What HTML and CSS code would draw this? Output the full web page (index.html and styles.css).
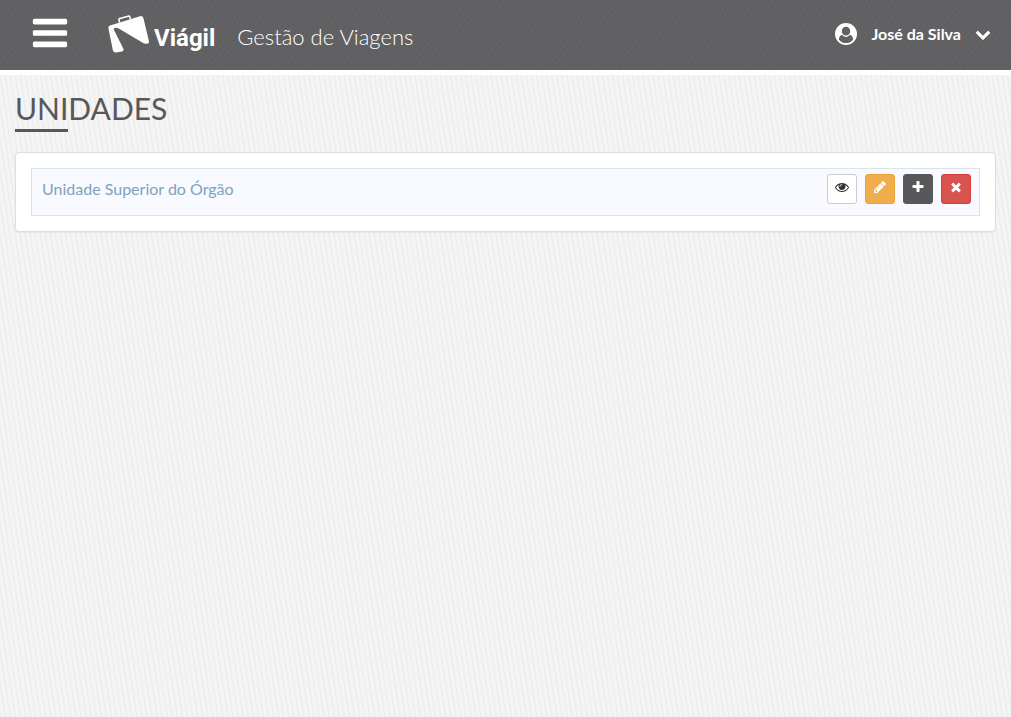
FILE: index.html
```
<!DOCTYPE html>
<html lang="pt-BR">
<head>
    <meta charset="utf-8">
    <title>Viágil - Unidades</title>
    <link rel="stylesheet" href="styles.css">
</head>
<body>
    <header class="topbar">
        <button type="button" class="menu-toggle" aria-label="Menu">
            <svg viewBox="0 0 1792 1792"><path d="M1664 1344v128q0 26-19 45t-45 19h-1408q-26 0-45-19t-19-45v-128q0-26 19-45t45-19h1408q26 0 45 19t19 45zm0-512v128q0 26-19 45t-45 19h-1408q-26 0-45-19t-19-45v-128q0-26 19-45t45-19h1408q26 0 45 19t19 45zm0-512v128q0 26-19 45t-45 19h-1408q-26 0-45-19t-19-45v-128q0-26 19-45t45-19h1408q26 0 45 19t19 45z"/></svg>
        </button>
        <a href="#" class="brand">
            <svg class="brand-icon" viewBox="0 0 42 38">
                <path d="M11.500 7.500L11 4.800Q10.800 3.700 12 3.400L20 1.200Q21.500 .9 21.900 2L22.300 4" fill="none" stroke="#fff" stroke-width="1.600"/>
                <path fill-rule="evenodd" d="M2 10.500L32 1.200Q34.600 .6 35.400 3L41 26.500Q41.300 28.700 39 28.700L36 28.500L12 14.200Q8 12.200 6.200 13.200Q5 14 6.500 16L15.500 34Q16 36 14 36.500L8 37.600Q5.800 37.800 5 35.800L.4 13.500Q0 11.200 2 10.500Z"/>
            </svg>
            <span class="brand-name">Viágil</span>
        </a>
        <span class="tagline">Gestão de Viagens</span>
        <button type="button" class="user-menu">
            <svg class="user-icon" viewBox="0 0 22 22">
                <path fill-rule="evenodd" d="M11 0a11 11 0 1 1 0 22a11 11 0 1 1 0-22zM11 3.800a4.200 4.400 0 1 0 0 8.800a4.200 4.400 0 1 0 0-8.800zM3.800 16.600A9.200 9.200 0 0 0 18.200 16.600c-.4-2.900-1.500-4.600-3.400-4.900-1 1.400-2.300 2.200-3.800 2.200s-2.800-.8-3.800-2.200c-1.900.3-3 2-3.400 4.900z"/>
            </svg>
            <span>José da Silva</span>
            <svg class="chevron" viewBox="0 0 1792 1792"><path d="M1683 808l-742 741q-19 19-45 19t-45-19l-742-741q-19-19-19-45.500t19-45.500l166-165q19-19 45-19t45 19l531 531 531-531q19-19 45-19t45 19l166 165q19 19 19 45.500t-19 45.500z"/></svg>
        </button>
    </header>

    <main class="content">
        <h1>Unidades</h1>
        <div class="panel">
            <div class="unit">
                <a href="#" class="unit-name">Unidade Superior do Órgão</a>
                <div class="actions">
                    <button type="button" class="btn btn-default" aria-label="Visualizar">
                        <svg viewBox="0 0 1792 1792"><path d="M1664 960q-152-236-381-353 61 104 61 225 0 185-131.500 316.500t-316.500 131.500-316.500-131.500-131.500-316.500q0-121 61-225-229 117-381 353 133 205 333.500 326.500t434.500 121.500 434.500-121.500 333.500-326.500zm-720-384q0-20-14-34t-34-14q-125 0-214.500 89.500t-89.500 214.500q0 20 14 34t34 14 34-14 14-34q0-86 61-147t147-61q20 0 34-14t14-34zm848 384q0 34-20 69-140 230-376.500 368.500t-499.500 138.500-499.500-139-376.500-368q-20-35-20-69t20-69q140-229 376.500-368t499.500-139 499.500 139 376.500 368q20 35 20 69z"/></svg>
                    </button>
                    <button type="button" class="btn btn-warning" aria-label="Editar">
                        <svg viewBox="0 0 1792 1792"><path d="M491 1536l91-91-235-235-91 91v107h128v128h107zm523-928q0-22-22-22-10 0-17 7l-542 542q-7 7-7 17 0 22 22 22 10 0 17-7l542-542q7-7 7-17zm-54-192l416 416-832 832h-416v-416zm683 96q0 53-37 90l-166 166-416-416 166-165q36-38 90-38 53 0 91 38l235 234q37 39 37 91z"/></svg>
                    </button>
                    <button type="button" class="btn btn-dark" aria-label="Adicionar">
                        <svg viewBox="0 0 1792 1792"><path d="M1600 736v192q0 40-28 68t-68 28h-416v416q0 40-28 68t-68 28h-192q-40 0-68-28t-28-68v-416h-416q-40 0-68-28t-28-68v-192q0-40 28-68t68-28h416v-416q0-40 28-68t68-28h192q40 0 68 28t28 68v416h416q40 0 68 28t28 68z"/></svg>
                    </button>
                    <button type="button" class="btn btn-danger" aria-label="Excluir">
                        <svg viewBox="0 0 1792 1792"><path d="M1490 1322q0 40-28 68l-136 136q-28 28-68 28t-68-28l-294-294-294 294q-28 28-68 28t-68-28l-136-136q-28-28-28-68t28-68l294-294-294-294q-28-28-28-68t28-68l136-136q28-28 68-28t68 28l294 294 294-294q28-28 68-28t68 28l136 136q28 28 28 68t-28 68l-294 294 294 294q28 28 28 68z"/></svg>
                    </button>
                </div>
            </div>
        </div>
    </main>
</body>
</html>
```
FILE: styles.css
```
* {
    box-sizing: border-box;
}
body {
    margin: 0;
    min-height: 100vh;
    font-family: Lato, sans-serif;
    font-size: 16px;
    color: #58585a;
    background: #f4f4f4 repeating-linear-gradient(81deg, #ececec 0, #f5f5f5 2px, #f5f5f5 4px, #ececec 5px);
}
svg {
    display: block;
    fill: currentColor;
}
button {
    font-family: inherit;
    cursor: pointer;
}

/* top bar */
.topbar {
    display: flex;
    align-items: center;
    height: 75px;
    padding: 0 20px 4px 30px;
    color: #fff;
    border-bottom: 5px solid #fff;
    background-color: #606062;
    background-image:
        repeating-linear-gradient(37deg, rgba(255, 255, 255, 0.03) 0, transparent 2px, transparent 3px),
        repeating-linear-gradient(127deg, rgba(0, 0, 0, 0.04) 0, transparent 2px, transparent 5px);
}
.menu-toggle {
    padding: 0;
    border: none;
    color: #fff;
    background: none;
}
.menu-toggle svg {
    width: 40px;
    height: 40px;
}
.brand {
    display: flex;
    align-items: center;
    gap: 4px;
    margin-left: 38px;
    padding-top: 2px;
    color: #fff;
    text-decoration: none;
}
.brand-icon {
    width: 42px;
    height: 38px;
}
.brand-name {
    padding-top: 8px;
    font-family: Roboto, sans-serif;
    font-size: 24px;
    line-height: 32px;
    font-weight: 700;
}
.tagline {
    margin-left: 22px;
    padding-top: 8px;
    font-size: 22px;
    line-height: 28px;
    font-weight: 300;
}
.user-menu {
    display: flex;
    align-items: center;
    gap: 14px;
    margin-left: auto;
    padding: 2px 0 0;
    border: none;
    font-size: 16px;
    font-weight: 700;
    line-height: 20px;
    color: #fff;
    background: none;
}
.user-icon {
    width: 22px;
    height: 22px;
}
.chevron {
    width: 16px;
    height: 16px;
}

/* page */
.content {
    padding: 15px;
}
h1 {
    margin: 0 0 20px;
    font-size: 30px;
    line-height: 37px;
    font-weight: 400;
    text-transform: uppercase;
}
h1::after {
    content: "";
    display: block;
    width: 53px;
    height: 3px;
    margin-top: 2px;
    background: #58585a;
}
.panel {
    padding: 15px;
    border: 1px solid #ddd;
    border-radius: 4px;
    background: #fff;
    box-shadow: 0 1px 1px rgba(0, 0, 0, 0.05);
}
.unit {
    display: flex;
    justify-content: space-between;
    align-items: flex-start;
    min-height: 48px;
    padding: 5px 8px 5px 10px;
    border: 1px solid #dae2ea;
    background: #f8faff;
}
.unit-name {
    padding-top: 5px;
    line-height: 20px;
    color: #7ea2bd;
    text-decoration: none;
}
.actions {
    display: flex;
    gap: 8px;
}
.btn {
    display: flex;
    justify-content: center;
    width: 30px;
    height: 30px;
    padding: 5px 0 0;
    border: 1px solid transparent;
    border-radius: 3px;
    color: #fff;
}
.btn svg {
    width: 14px;
    height: 14px;
}
.btn-default {
    color: #333;
    background: #fff;
    border-color: #ccc;
}
.btn-warning {
    background: #f0ad4e;
    border-color: #eea236;
}
.btn-dark {
    background: #58585a;
    border-color: #58585a;
}
.btn-danger {
    background: #d9534f;
    border-color: #d43f3a;
}
```
